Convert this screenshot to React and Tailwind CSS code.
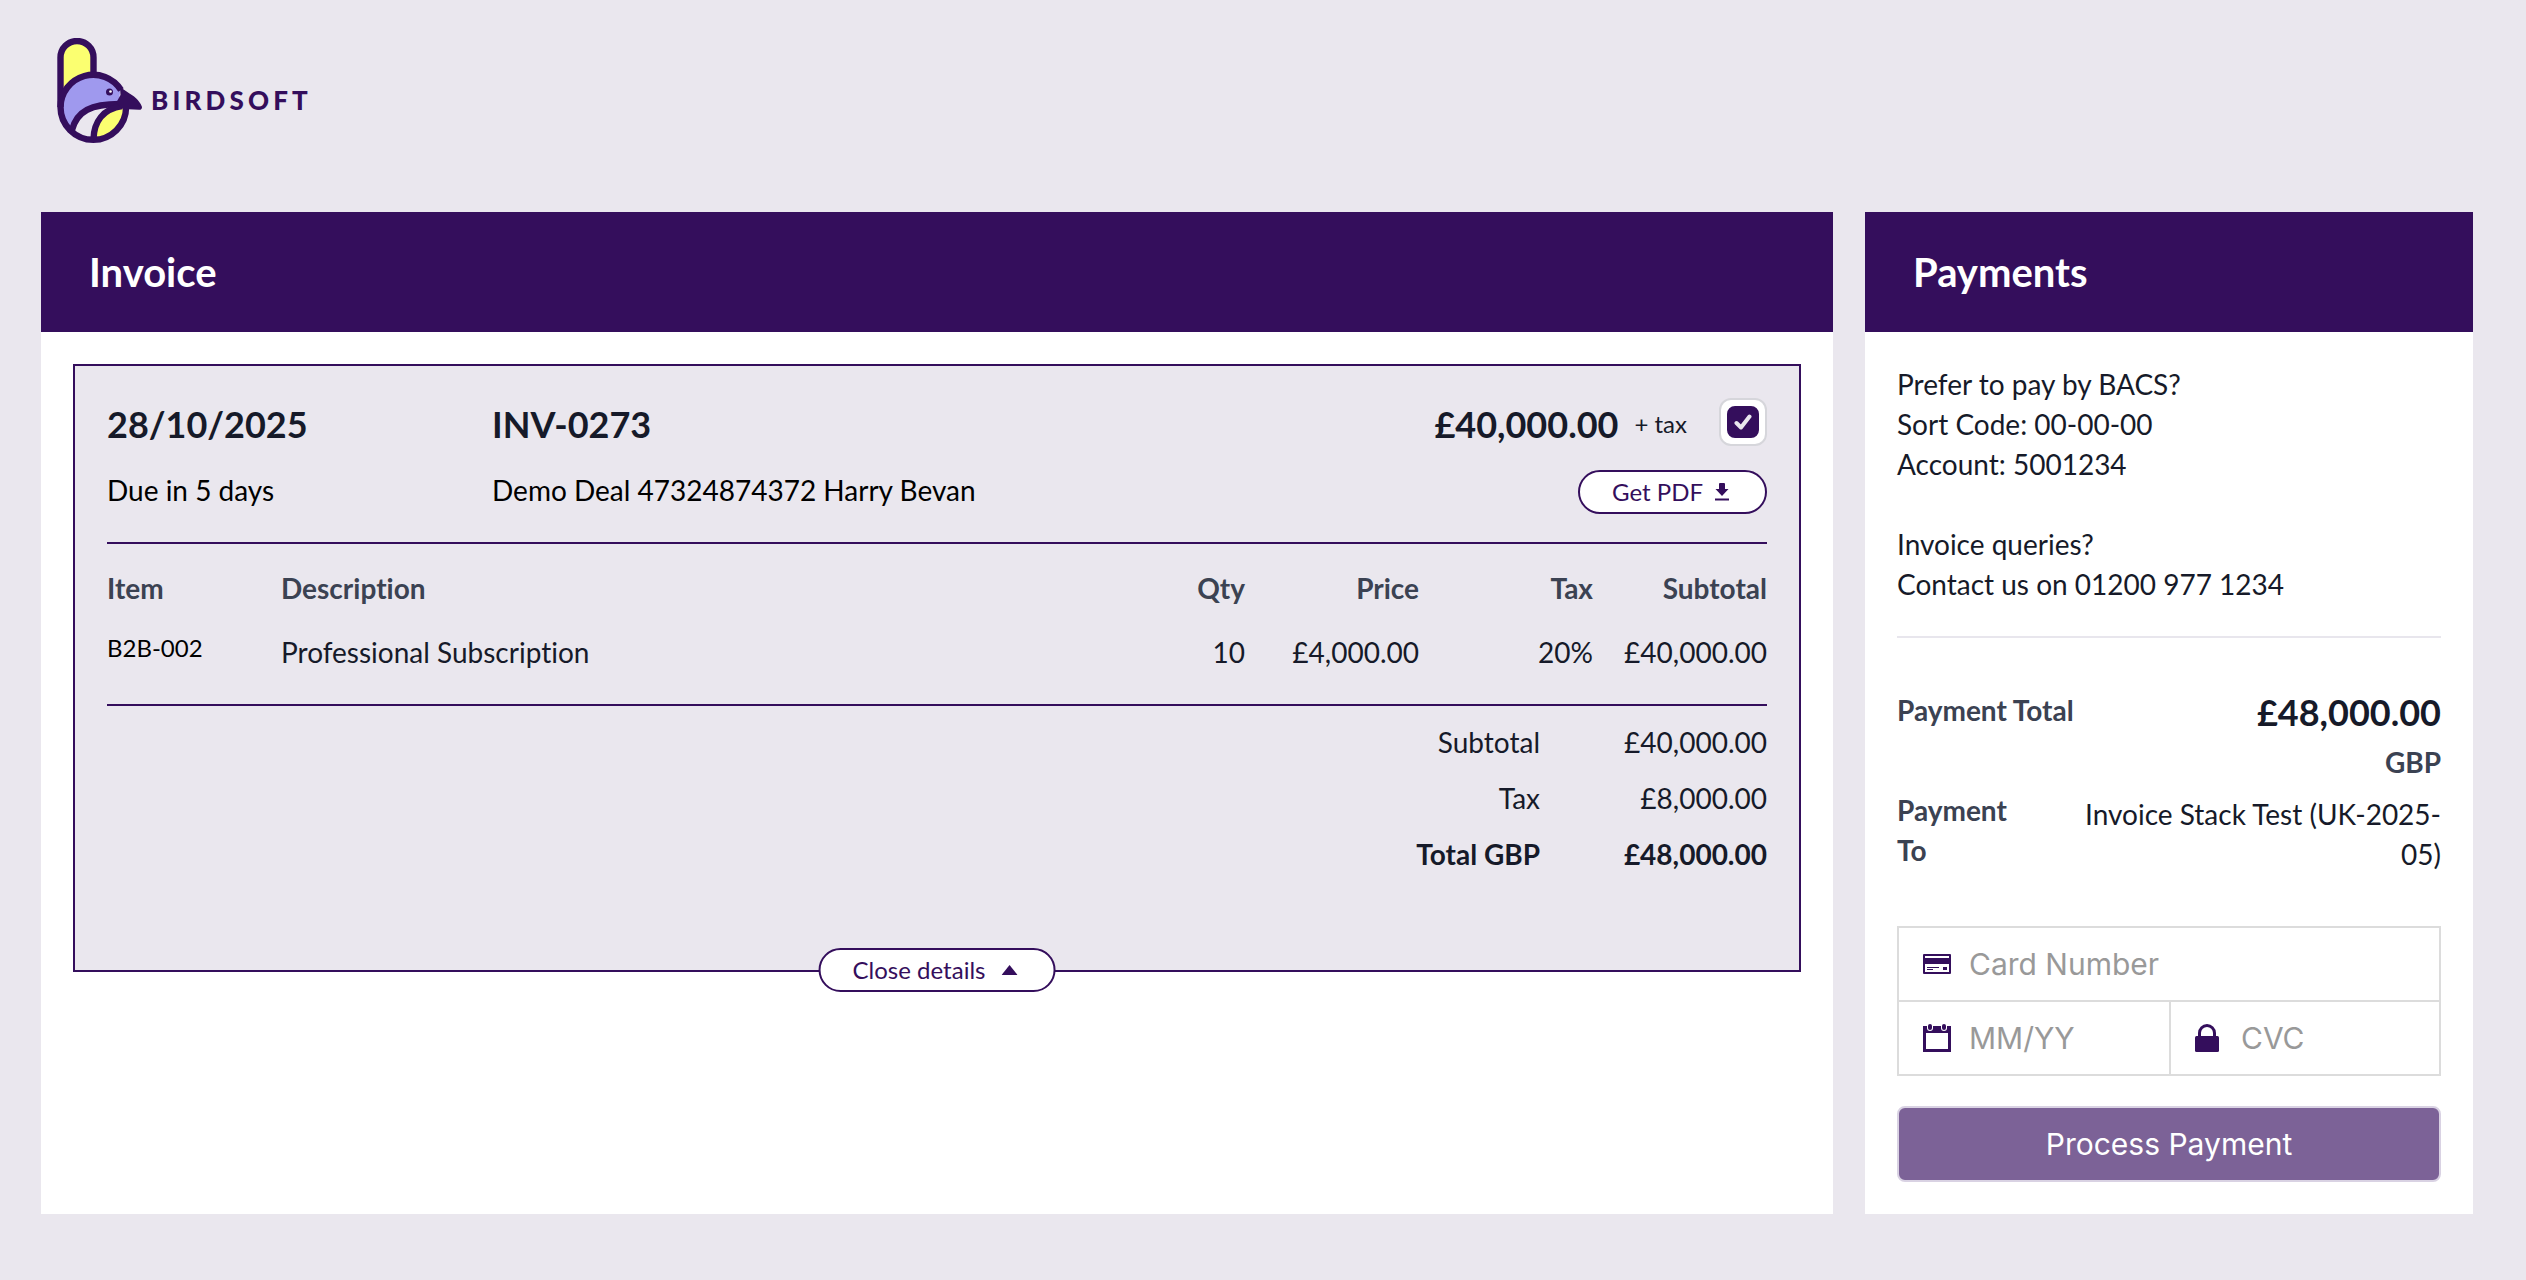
import { useState } from 'react';

const lineItems = [
  {
    code: 'B2B-002',
    description: 'Professional Subscription',
    qty: '10',
    price: '£4,000.00',
    tax: '20%',
    subtotal: '£40,000.00'
  }
];

const totals = [
  { label: 'Subtotal', value: '£40,000.00' },
  { label: 'Tax', value: '£8,000.00' },
  { label: 'Total GBP', value: '£48,000.00', strong: true }
];

const Logo = () => (
  <a href="#" aria-label="Birdsoft" className="inline-flex items-end text-[#340e5c]">
    <svg viewBox="0 0 86 106" className="h-[106px] w-[86px]" fill="none">
      <path d="M4 54V19.500a16 16 0 0 1 32 0V37z" fill="#fbff70" />
      <path d="M3.500 69a32.800 32.800 0 0 1 60-18l-2 15C40 66 22 70 16 92C8 87 3.500 79 3.500 69z" fill="#9f99ee" />
      <path d="M37 101C38 84 48 71 69 69C68 88 56 101 37 101z" fill="#fbff70" />
      <path d="M36.500 36V19.500a16.500 16.500 0 0 0-33 0V69a32.800 32.800 0 0 0 65.600 0" stroke="currentColor" strokeWidth="6.400" />
      <path d="M3.500 69a32.800 32.800 0 0 1 60.500-17" stroke="currentColor" strokeWidth="6.400" />
      <path d="M15 92C20 73 34 66 63 66" stroke="currentColor" strokeWidth="6.400" />
      <path d="M36.500 101C37 84 46 71 65 68" stroke="currentColor" strokeWidth="6.400" />
      <path d="M63 49L72.500 55.500C79 59 84 65 85 69Q85 72 82 71.800L66 71L59 65L63.500 57z" fill="currentColor" />
      <circle cx="52.500" cy="54" r="3.500" fill="currentColor" />
      <circle cx="53.500" cy="53.500" r="1.300" fill="#fff" />
    </svg>
    <span className="mb-7 ml-2 text-[26px] leading-8 font-black tracking-[0.16em]">BIRDSOFT</span>
  </a>
);

const DownloadIcon = () => (
  <svg viewBox="0 0 14 18" className="h-[18px] w-[14px]" fill="currentColor" aria-hidden="true">
    <path d="M4 1q0-1 1-1h4q1 0 1 1v5h3.500L7 13 .5 6H4zM0 15.500h14V17.500H0z" />
  </svg>
);

const CardIcon = () => (
  <svg viewBox="0 0 28 20" className="h-5 w-7" fill="currentColor" aria-hidden="true">
    <path fillRule="evenodd" d="M1 0h26q1 0 1 1v18q0 1-1 1H1q-1 0-1-1V1q0-1 1-1zM2 2v2h24V2zM2 10v8h24v-8z" />
    <path d="M4 13h12v1H4zM4 15h6v1H4zM20 13h4v3h-4z" />
  </svg>
);

const CalendarIcon = () => (
  <svg viewBox="0 0 28 28" className="h-7 w-7" fill="currentColor" aria-hidden="true">
    <path fillRule="evenodd" d="M0 2h28v26H0zM3 9v16h22V9z" />
    <rect x="4" y="-1" width="6" height="8" rx="3" fill="#fff" />
    <rect x="18" y="-1" width="6" height="8" rx="3" fill="#fff" />
    <rect x="5" y="0" width="4" height="6" rx="2" />
    <rect x="19" y="0" width="4" height="6" rx="2" />
  </svg>
);

const LockIcon = () => (
  <svg viewBox="0 0 24 28" className="h-7 w-6" aria-hidden="true">
    <path d="M4.500 13V9a7.500 7.500 0 0 1 15 0v4" fill="none" stroke="currentColor" strokeWidth="3" />
    <rect y="12" width="24" height="16" rx="1.500" fill="currentColor" />
  </svg>
);

const PanelHeader = ({ title }) => (
  <header className="bg-[#340e5c] px-12 py-9">
    <h2 className="text-[40px] leading-12 font-bold text-white">{title}</h2>
  </header>
);

const CardField = ({ id, label, icon, value, onChange, className }) => (
  <div className={`box-content flex h-18 items-center ${className}`}>
    <label htmlFor={id} aria-label={label} className="ml-6 flex w-7 shrink-0">
      {icon}
    </label>
    <input
      id={id}
      value={value}
      onChange={onChange}
      placeholder={label}
      className="mr-6 ml-[18px] w-full min-w-0 bg-transparent font-['Inter'] text-[30px] leading-10 outline-none placeholder:text-[#999999]"
    />
  </div>
);

const InvoiceCard = () => {
  const [selected, setSelected] = useState(true);
  const [open, setOpen] = useState(true);

  return (
    <article className="relative border-2 border-[#340e5c] bg-[#eae7ee] px-8 pt-8 pb-24">
      <div className="grid grid-cols-[385px_1fr_auto] items-start gap-y-5">
        <h3 className="text-[36px] leading-[52px] font-bold">28/10/2025</h3>
        <h3 className="text-[36px] leading-[52px] font-bold">INV-0273</h3>
        <div className="flex items-center justify-end">
          <span className="text-[36px] leading-[52px] font-bold">£40,000.00</span>
          <span className="ml-4 text-2xl">+ tax</span>
          <label className="ml-8 flex size-12 items-center justify-center self-start rounded-xl border-2 border-[#d6d6db] bg-white">
            <input
              type="checkbox"
              aria-label="Pay invoice INV-0273"
              checked={selected}
              onChange={(e) => setSelected(e.target.checked)}
              className="peer size-8 appearance-none rounded-lg border-2 border-[#340e5c] checked:bg-[#340e5c]"
            />
            <svg viewBox="0 0 18 16" className="pointer-events-none absolute hidden h-4 w-[18px] peer-checked:block" fill="none" aria-hidden="true">
              <path d="M2.500 9L7 13.500L15.500 2.500" stroke="#eae7ee" strokeWidth="4" strokeLinecap="round" strokeLinejoin="round" />
            </svg>
          </label>
        </div>

        <p className="text-[28px] leading-10 text-black">Due in 5 days</p>
        <p className="text-[28px] leading-10 text-black">Demo Deal 47324874372 Harry Bevan</p>
        <button
          type="button"
          className="flex h-11 items-center gap-3 justify-self-end rounded-full border-2 border-[#340e5c] bg-white pr-9 pl-8 text-2xl text-[#340e5c]"
        >
          Get PDF
          <DownloadIcon />
        </button>
      </div>

      {open && (
        <>
          <div className="mt-7 border-y-2 border-[#340e5c] pt-6 pb-8">
            <table className="w-full table-fixed text-[28px] leading-10">
              <thead className="text-[#3b4252]">
                <tr>
                  <th className="w-[174px] pb-6 text-left font-bold">Item</th>
                  <th className="pb-6 text-left font-bold">Description</th>
                  <th className="w-[174px] pb-6 text-right font-bold">Qty</th>
                  <th className="w-[174px] pb-6 text-right font-bold">Price</th>
                  <th className="w-[174px] pb-6 text-right font-bold">Tax</th>
                  <th className="w-[174px] pb-6 text-right font-bold">Subtotal</th>
                </tr>
              </thead>
              <tbody>
                {lineItems.map((item) => (
                  <tr key={item.code} className="align-top">
                    <td className="text-2xl text-black">{item.code}</td>
                    <td>{item.description}</td>
                    <td className="text-right">{item.qty}</td>
                    <td className="text-right">{item.price}</td>
                    <td className="text-right">{item.tax}</td>
                    <td className="text-right">{item.subtotal}</td>
                  </tr>
                ))}
              </tbody>
            </table>
          </div>

          <dl className="mt-4 space-y-4 text-[28px] leading-10">
            {totals.map((row) => (
              <div key={row.label} className={row.strong ? 'flex justify-end font-bold' : 'flex justify-end'}>
                <dt>{row.label}</dt>
                <dd className="w-[227px] text-right">{row.value}</dd>
              </div>
            ))}
          </dl>
        </>
      )}

      <button
        type="button"
        onClick={() => setOpen((prev) => !prev)}
        className="absolute -bottom-[22px] left-1/2 flex h-11 -translate-x-1/2 items-center gap-4 rounded-full border-2 border-[#340e5c] bg-white pr-9 pl-8 text-2xl whitespace-nowrap text-[#340e5c]"
      >
        {open ? 'Close details' : 'Open details'}
        <svg viewBox="0 0 16 10" className="h-[10px] w-4" fill="currentColor" aria-hidden="true">
          <path d="M8 0l8 10H0z" />
        </svg>
      </button>
    </article>
  );
};

const PaymentForm = () => {
  const [card, setCard] = useState({ number: '', expiry: '', cvc: '' });
  const update = (key) => (e) => setCard((prev) => ({ ...prev, [key]: e.target.value }));

  return (
    <form onSubmit={(e) => e.preventDefault()} className="mt-[52px] text-[#340e5c]">
      <div className="grid grid-cols-2 border-2 border-[#dcdcdc]">
        <CardField
          id="card-number"
          label="Card Number"
          icon={<CardIcon />}
          value={card.number}
          onChange={update('number')}
          className="col-span-2 border-b-2 border-[#dcdcdc]"
        />
        <CardField id="card-expiry" label="MM/YY" icon={<CalendarIcon />} value={card.expiry} onChange={update('expiry')} className="" />
        <CardField
          id="card-cvc"
          label="CVC"
          icon={<LockIcon />}
          value={card.cvc}
          onChange={update('cvc')}
          className="border-l-2 border-[#dcdcdc]"
        />
      </div>
      <button
        type="submit"
        className="mt-[30px] h-[76px] w-full rounded-lg border-2 border-[#d9d2e3] bg-[#7c6297] font-['Inter'] text-[30px] text-white"
      >
        Process Payment
      </button>
    </form>
  );
};

const App = () => (
  <div className="min-h-screen bg-[#eae7ee] pr-[53px] pb-16 pl-[41px] font-['Lato',sans-serif] text-[#161a29] [font-variant-ligatures:none]">
    <div className="flex h-[212px] items-start pt-[38px] pl-4">
      <Logo />
    </div>

    <main className="flex gap-8">
      <section className="min-w-0 flex-1 bg-white">
        <PanelHeader title="Invoice" />
        <div className="p-8">
          <InvoiceCard />
        </div>
      </section>

      <section className="w-1/4 shrink-0 bg-white">
        <PanelHeader title="Payments" />
        <div className="p-8">
          <div className="border-b-2 border-[#e8e6ed] pb-8 text-[28px] leading-10">
            <p>Prefer to pay by BACS?</p>
            <p>Sort Code: 00-00-00</p>
            <p>Account: 5001234</p>
            <p className="mt-10">Invoice queries?</p>
            <p>Contact us on 01200 977 1234</p>
          </div>

          <dl className="mt-[52px] text-[28px] leading-10">
            <div className="flex justify-between">
              <dt className="font-bold text-[#3b4252]">Payment Total</dt>
              <dd className="text-right">
                <div className="text-[36px] leading-11 font-bold">£48,000.00</div>
                <div className="mt-2 font-bold text-[#3b4252]">GBP</div>
              </dd>
            </div>
            <div className="mt-2 flex justify-between gap-4">
              <dt className="w-32 font-bold text-[#3b4252]">Payment To</dt>
              <dd className="max-w-[376px] pt-1 text-right">Invoice Stack Test (UK-2025-05)</dd>
            </div>
          </dl>

          <PaymentForm />
        </div>
      </section>
    </main>
  </div>
);

export default App;
